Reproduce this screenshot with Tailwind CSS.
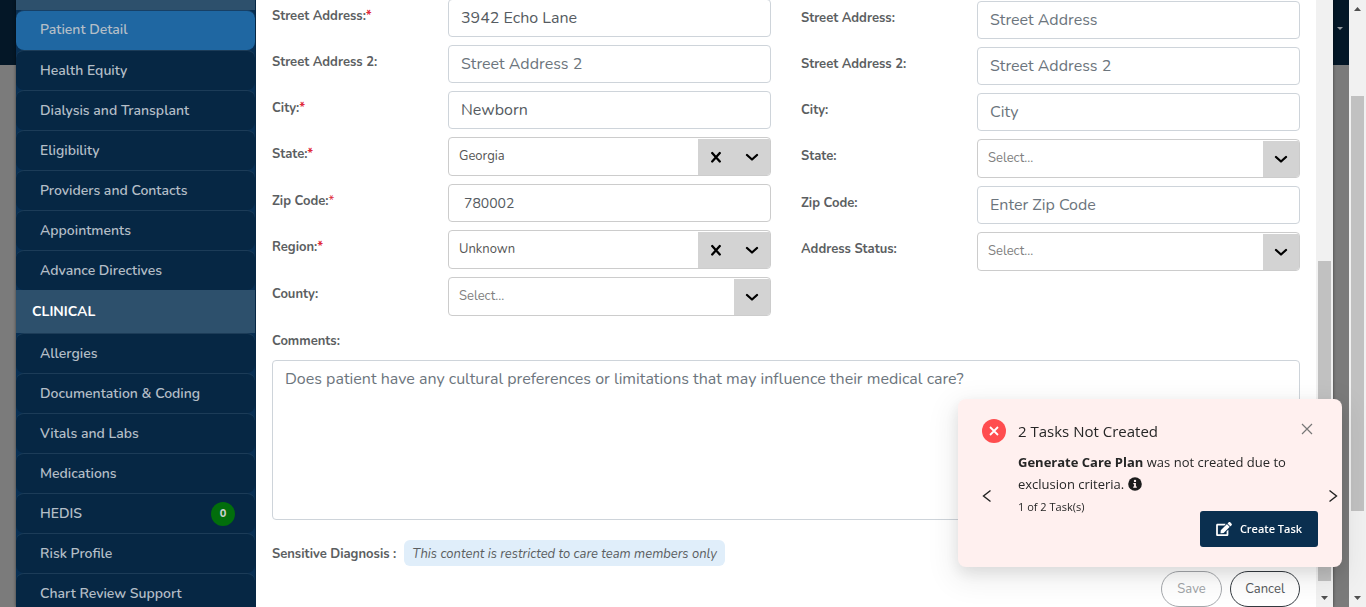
<!DOCTYPE html>
<html lang="en">
<head>
<meta charset="utf-8">
<title>Patient Detail</title>
<script src="https://cdn.jsdelivr.net/npm/@tailwindcss/browser@4"></script>
</head>
<body class="relative flex h-screen overflow-hidden bg-[#7b7b7b] font-['Nunito','Lato',sans-serif] text-[13px] text-[#5b5e61]">

<!-- Dimmed page behind the dialog -->
<div class="min-w-0 flex-1" aria-hidden="true">
  <div class="flex h-[65px] items-start justify-end bg-[#041727] pt-[27px] pr-1.5">
    <svg class="h-[3px] w-1.5" viewBox="0 0 6 3" fill="#969ba0"><path d="M0 0h6L3 3z"/></svg>
  </div>
</div>

<!-- Page scrollbar -->
<div class="flex w-[17px] flex-col items-center bg-[#f1f1f1]" aria-hidden="true">
  <svg class="h-[18px] w-[17px] shrink-0" viewBox="0 0 17 18" fill="#505050"><path d="M8.500 7l3.500 4h-7z"/></svg>
  <div class="mt-[78px] w-[13px] flex-1 bg-[#c1c1c1]"></div>
  <div class="h-[79px] shrink-0"></div>
  <svg class="h-[17px] w-[17px] shrink-0" viewBox="0 0 17 17" fill="#505050"><path d="M5 6h7l-3.500 4z"/></svg>
</div>

<!-- Dialog -->
<main class="absolute inset-y-0 right-[33px] left-4 flex bg-white shadow-[0_0_3px_rgba(0,0,0,0.5)]">

  <nav class="w-60 shrink-0 overflow-hidden border-r border-[#062744] bg-[#082f53] text-sm font-semibold text-[#b4bec7]">
    <div class="h-2.5 bg-[#2d506c]"></div>
    <a href="#" class="flex h-10 items-center rounded-lg border-t border-[#174066] bg-[#1f67a2] px-6 pb-0.5">Patient Detail</a>
    <a href="#" class="flex h-10 items-center rounded-lg border-t border-[#1c3c58] bg-[#062744] px-6">Health Equity</a>
    <a href="#" class="flex h-10 items-center rounded-lg border-t border-[#1c3c58] bg-[#062744] px-6">Dialysis and Transplant</a>
    <a href="#" class="flex h-10 items-center rounded-lg border-t border-[#1c3c58] bg-[#062744] px-6">Eligibility</a>
    <a href="#" class="flex h-10 items-center rounded-lg border-t border-[#1c3c58] bg-[#062744] px-6">Providers and Contacts</a>
    <a href="#" class="flex h-10 items-center rounded-lg border-t border-[#1c3c58] bg-[#062744] px-6">Appointments</a>
    <a href="#" class="flex h-10 items-center rounded-lg border-t border-[#1c3c58] bg-[#062744] px-6">Advance Directives</a>
    <h2 class="flex h-[43px] items-center bg-[#2d506c] px-4 pt-px font-bold text-white">CLINICAL</h2>
    <a href="#" class="flex h-10 items-center rounded-lg border-t border-[#1c3c58] bg-[#062744] px-6">Allergies</a>
    <a href="#" class="flex h-10 items-center rounded-lg border-t border-[#1c3c58] bg-[#062744] px-6">Documentation &amp; Coding</a>
    <a href="#" class="flex h-10 items-center rounded-lg border-t border-[#1c3c58] bg-[#062744] px-6">Vitals and Labs</a>
    <a href="#" class="flex h-10 items-center rounded-lg border-t border-[#1c3c58] bg-[#062744] px-6">Medications</a>
    <a href="#" class="flex h-10 items-center justify-between rounded-lg border-t border-[#1c3c58] bg-[#062744] pr-5 pl-6">HEDIS
      <span class="flex size-6 items-center justify-center rounded-full bg-[#026e0c] pt-px text-[11px] font-extrabold text-[#c8d0cc]">0</span></a>
    <a href="#" class="flex h-10 items-center rounded-lg border-t border-[#1c3c58] bg-[#062744] px-6">Risk Profile</a>
    <a href="#" class="flex h-10 items-center rounded-lg border-t border-[#1c3c58] bg-[#062744] px-6">Chart Review Support</a>
  </nav>

  <form class="min-w-0 flex-1 px-4">
    <div class="grid grid-cols-2 gap-x-[30px]">

      <div class="-mt-px flex flex-col gap-2">
        <div class="flex">
          <label for="street" class="w-44 shrink-0 pt-[7px] leading-5 font-bold">Street Address:<span class="text-[#e02b3c]">*</span></label>
          <input id="street" type="text" value="3942 Echo Lane" class="h-[38px] min-w-0 flex-1 rounded border border-[#ced4da] px-3 text-base text-[#555b61]">
        </div>
        <div class="flex">
          <label for="street2" class="w-44 shrink-0 pt-[7px] leading-5 font-bold">Street Address 2:</label>
          <input id="street2" type="text" placeholder="Street Address 2" class="h-[38px] min-w-0 flex-1 rounded border border-[#ced4da] px-3 text-base placeholder:text-[#6c757d]">
        </div>
        <div class="flex">
          <label for="city" class="w-44 shrink-0 pt-[7px] leading-5 font-bold">City:<span class="text-[#e02b3c]">*</span></label>
          <input id="city" type="text" value="Newborn" class="h-[38px] min-w-0 flex-1 rounded border border-[#ced4da] px-3 text-base text-[#555b61]">
        </div>
        <div class="flex">
          <label for="state" class="w-44 shrink-0 pt-[7px] leading-5 font-bold">State:<span class="text-[#e02b3c]">*</span></label>
          <div class="flex h-[39px] min-w-0 flex-1 overflow-hidden rounded border border-[#ccc] pt-px">
            <select id="state" class="min-w-0 flex-1 appearance-none px-2.5 text-[#555]"><option>Georgia</option></select>
            <button type="button" aria-label="Clear state" class="flex w-9 items-center justify-center bg-[#d3d3d3]"><svg class="size-3" viewBox="0 0 12 12" stroke="#000" stroke-width="2.300" stroke-linecap="round"><path d="M2.200 2l7.600 8.500M9.800 2l-7.600 8.500"/></svg></button>
            <span class="flex w-9 items-center justify-center bg-[#d3d3d3]"><svg class="h-2 w-3.5" viewBox="0 0 14 8" fill="none" stroke="#000" stroke-width="2.300" stroke-linecap="round" stroke-linejoin="round"><path d="M2 2l5 4.500 5-4.500"/></svg></span>
          </div>
        </div>
        <div class="flex">
          <label for="zip" class="w-44 shrink-0 pt-[7px] leading-5 font-bold">Zip Code:<span class="font-normal text-[#e02b3c]">*</span></label>
          <input id="zip" type="text" value="780002" class="h-[38px] min-w-0 flex-1 rounded border border-[#ccc] px-[15px] text-sm text-[#555b61]">
        </div>
        <div class="flex">
          <label for="region" class="w-44 shrink-0 pt-[7px] leading-5 font-bold">Region:<span class="text-[#e02b3c]">*</span></label>
          <div class="flex h-[39px] min-w-0 flex-1 overflow-hidden rounded border border-[#ccc] pt-px">
            <select id="region" class="min-w-0 flex-1 appearance-none px-2.5 text-[#555]"><option>Unknown</option></select>
            <button type="button" aria-label="Clear region" class="flex w-9 items-center justify-center bg-[#d3d3d3]"><svg class="size-3" viewBox="0 0 12 12" stroke="#000" stroke-width="2.300" stroke-linecap="round"><path d="M2.200 2l7.600 8.500M9.800 2l-7.600 8.500"/></svg></button>
            <span class="flex w-9 items-center justify-center bg-[#d3d3d3]"><svg class="h-2 w-3.5" viewBox="0 0 14 8" fill="none" stroke="#000" stroke-width="2.300" stroke-linecap="round" stroke-linejoin="round"><path d="M2 2l5 4.500 5-4.500"/></svg></span>
          </div>
        </div>
        <div class="flex">
          <label for="county" class="w-44 shrink-0 pt-[7px] leading-5 font-bold">County:</label>
          <div class="flex h-[39px] min-w-0 flex-1 overflow-hidden rounded border border-[#ccc] pt-px">
            <select id="county" class="min-w-0 flex-1 appearance-none px-2.5 text-[#808080]"><option>Select...</option></select>
            <span class="flex w-9 items-center justify-center bg-[#d3d3d3]"><svg class="h-2 w-3.5" viewBox="0 0 14 8" fill="none" stroke="#000" stroke-width="2.300" stroke-linecap="round" stroke-linejoin="round"><path d="M2 2l5 4.500 5-4.500"/></svg></span>
          </div>
        </div>
      </div>

      <div class="mt-px flex flex-col gap-2">
        <div class="flex">
          <label for="alt-street" class="w-44 shrink-0 pt-[7px] leading-5 font-bold">Street Address:</label>
          <input id="alt-street" type="text" placeholder="Street Address" class="h-[38px] min-w-0 flex-1 rounded border border-[#ced4da] px-3 text-base placeholder:text-[#6c757d]">
        </div>
        <div class="flex">
          <label for="alt-street2" class="w-44 shrink-0 pt-[7px] leading-5 font-bold">Street Address 2:</label>
          <input id="alt-street2" type="text" placeholder="Street Address 2" class="h-[38px] min-w-0 flex-1 rounded border border-[#ced4da] px-3 text-base placeholder:text-[#6c757d]">
        </div>
        <div class="flex">
          <label for="alt-city" class="w-44 shrink-0 pt-[7px] leading-5 font-bold">City:</label>
          <input id="alt-city" type="text" placeholder="City" class="h-[38px] min-w-0 flex-1 rounded border border-[#ced4da] px-3 text-base placeholder:text-[#6c757d]">
        </div>
        <div class="flex">
          <label for="alt-state" class="w-44 shrink-0 pt-[7px] leading-5 font-bold">State:</label>
          <div class="flex h-[39px] min-w-0 flex-1 overflow-hidden rounded border border-[#ccc] pt-px">
            <select id="alt-state" class="min-w-0 flex-1 appearance-none px-2.5 text-[#808080]"><option>Select...</option></select>
            <span class="flex w-9 items-center justify-center bg-[#d3d3d3]"><svg class="h-2 w-3.5" viewBox="0 0 14 8" fill="none" stroke="#000" stroke-width="2.300" stroke-linecap="round" stroke-linejoin="round"><path d="M2 2l5 4.500 5-4.500"/></svg></span>
          </div>
        </div>
        <div class="flex">
          <label for="alt-zip" class="w-44 shrink-0 pt-[7px] leading-5 font-bold">Zip Code:</label>
          <input id="alt-zip" type="text" placeholder="Enter Zip Code" class="h-[38px] min-w-0 flex-1 rounded border border-[#ced4da] px-3 text-base placeholder:text-[#6c757d]">
        </div>
        <div class="flex">
          <label for="status" class="w-44 shrink-0 pt-[7px] leading-5 font-bold">Address Status:</label>
          <div class="flex h-[39px] min-w-0 flex-1 overflow-hidden rounded border border-[#ccc] pt-px">
            <select id="status" class="min-w-0 flex-1 appearance-none px-2.5 text-[#808080]"><option>Select...</option></select>
            <span class="flex w-9 items-center justify-center bg-[#d3d3d3]"><svg class="h-2 w-3.5" viewBox="0 0 14 8" fill="none" stroke="#000" stroke-width="2.300" stroke-linecap="round" stroke-linejoin="round"><path d="M2 2l5 4.500 5-4.500"/></svg></span>
          </div>
        </div>
      </div>
    </div>

    <label for="comments" class="mt-[15px] mb-[9px] block leading-5 font-bold">Comments:</label>
    <textarea id="comments" placeholder="Does patient have any cultural preferences or limitations that may influence their medical care?" class="block h-40 w-full resize-none rounded border border-[#ced4da] px-3 py-1.5 text-base placeholder:text-[#6c757d]"></textarea>

    <div class="mt-5 flex items-center gap-2 leading-6">
      <span class="pt-0.5 font-bold">Sensitive Diagnosis :</span>
      <em class="rounded-md bg-[#e0eefa] px-2 pt-0.5">This content is restricted to care team members only</em>
    </div>

    <div class="mt-[5px] flex justify-end gap-2">
      <button type="button" disabled class="h-9 w-[61px] rounded-full border border-[#a5a8ac] pt-0.5 text-[#a0a3a6]">Save</button>
      <button type="button" class="h-9 w-[70px] rounded-full border border-[#343a40] pt-0.5 text-[#55585b]">Cancel</button>
    </div>
  </form>

  <!-- Dialog scrollbar -->
  <div class="flex w-[17px] shrink-0 flex-col items-center bg-[#f1f1f1]" aria-hidden="true">
    <div class="mt-[261px] w-[13px] flex-1 bg-[#c1c1c1]"></div>
    <div class="h-[9px] shrink-0"></div>
    <svg class="h-[17px] w-[17px] shrink-0" viewBox="0 0 17 17" fill="#505050"><path d="M5 6h7l-3.500 4z"/></svg>
  </div>
</main>

<!-- Notification -->
<section role="alert" class="fixed right-6 bottom-10 flex w-96 rounded-lg bg-[#fff0ef] pt-5 pb-5 font-['Open_Sans','Noto_Sans',sans-serif] text-[#262626] shadow-[0_6px_16px_rgba(0,0,0,0.1),0_9px_28px_8px_rgba(0,0,0,0.06)]">
  <div class="flex w-[60px] shrink-0 flex-col items-start pl-6">
    <svg class="size-6" viewBox="0 0 24 24"><circle cx="12" cy="12" r="12" fill="#ff4d4f"/><path d="M8 8l8 8M16 8l-8 8" stroke="#fff" stroke-width="1.800"/></svg>
    <button type="button" aria-label="Previous task" class="mt-[46px]"><svg class="h-3.5 w-2.5" viewBox="0 0 10 14" fill="none" stroke="#222" stroke-width="1.400"><path d="M8.500 1.500L1.500 7l7 5.500"/></svg></button>
  </div>
  <div class="min-w-0 flex-1">
    <h3 class="text-[15px] leading-6">2 Tasks Not Created</h3>
    <p class="mt-2 text-[13px] leading-[22px]"><strong>Generate Care Plan</strong> <span>was not created due to exclusion criteria.</span>
      <svg class="inline size-3.5 align-[-2px]" viewBox="0 0 14 14"><circle cx="7" cy="7" r="6.800" fill="#1c1c1c"/><path d="M5.300 6h2.600v3.600h.9v1.200H5.200V9.600h.9V7.200h-.8z" fill="#fff0ef"/><circle cx="7" cy="3.900" r="1.200" fill="#fff0ef"/></svg></p>
    <p class="text-[11px] leading-6">1 of 2 Task(s)</p>
    <div class="-mt-2 flex justify-end">
      <button type="button" class="flex h-9 w-[118px] items-center justify-center gap-2 rounded-[3px] bg-[#0a2f4f] text-[11px] font-semibold text-white"><svg class="h-3.5 w-4" viewBox="0 0 576 512" fill="#fff"><path d="M402.600 83.200l90.200 90.200c3.800 3.800 3.800 10 0 13.800L274.400 405.600l-92.800 10.300c-12.400 1.400-22.900-9.100-21.500-21.500l10.300-92.800L388.800 83.200c3.800-3.800 10-3.800 13.800 0zm162-22.900l-48.800-48.800c-15.200-15.200-39.900-15.200-55.200 0l-35.400 35.400c-3.800 3.800-3.800 10 0 13.800l90.200 90.200c3.800 3.800 10 3.800 13.800 0l35.400-35.400c15.200-15.300 15.200-40 0-55.200zM384 346.200V448H64V128h229.800c3.200 0 6.200-1.300 8.500-3.500l40-40c7.600-7.600 2.200-20.500-8.500-20.500H48C21.500 64 0 85.500 0 112v352c0 26.500 21.500 48 48 48h352c26.500 0 48-21.500 48-48V306.200c0-10.700-12.900-16-20.500-8.500l-40 40c-2.200 2.300-3.500 5.300-3.500 8.500z"/></svg>Create Task</button>
    </div>
  </div>
  <div class="flex w-6 shrink-0 flex-col items-end pr-1">
    <button type="button" aria-label="Next task" class="mt-[70px]"><svg class="h-3.5 w-2.5" viewBox="0 0 10 14" fill="none" stroke="#222" stroke-width="1.400"><path d="M1.500 1.500l7 5.500-7 5.500"/></svg></button>
  </div>
  <button type="button" aria-label="Close" class="absolute top-6 right-[29px]"><svg class="size-3" viewBox="0 0 12 12" stroke="#777" stroke-width="1.200"><path d="M1 1l10 10M11 1L1 11"/></svg></button>
</section>
</body>
</html>
